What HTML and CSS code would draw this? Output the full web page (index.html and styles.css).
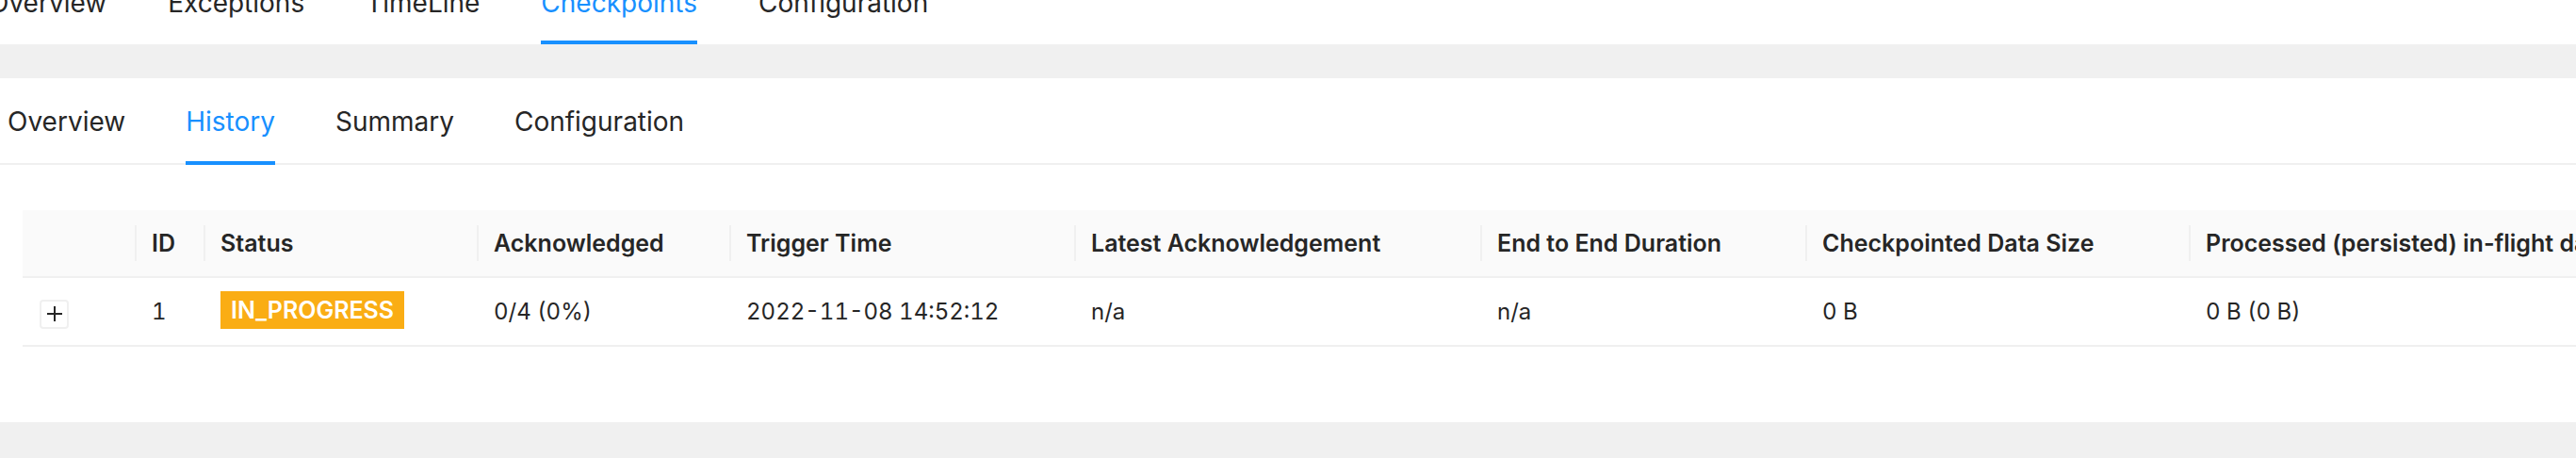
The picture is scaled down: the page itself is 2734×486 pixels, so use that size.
FILE: index.html
```html
<!DOCTYPE html>
<html lang="en">
<head>
<meta charset="utf-8">
<title>Checkpoints - History</title>
<link rel="stylesheet" href="styles.css">
</head>
<body>
  <nav class="topnav">
    <a class="toptab first">Overview</a>
    <a class="toptab">Exceptions</a>
    <a class="toptab">TimeLine</a>
    <a class="toptab active">Checkpoints</a>
    <a class="toptab">Configuration</a>
  </nav>

  <section class="card">
    <nav class="subnav">
      <a class="subtab">Overview</a>
      <a class="subtab active">History</a>
      <a class="subtab">Summary</a>
      <a class="subtab">Configuration</a>
    </nav>

    <div class="table-wrap">
      <table class="history">
        <colgroup>
          <col class="c-expand">
          <col class="c-id">
          <col class="c-status">
          <col class="c-ack">
          <col class="c-trigger">
          <col class="c-latest">
          <col class="c-e2e">
          <col class="c-size">
          <col class="c-processed">
        </colgroup>
        <thead>
          <tr>
            <th></th>
            <th>ID</th>
            <th>Status</th>
            <th>Acknowledged</th>
            <th>Trigger Time</th>
            <th>Latest Acknowledgement</th>
            <th>End to End Duration</th>
            <th>Checkpointed Data Size</th>
            <th>Processed (persisted) in-flight data</th>
          </tr>
        </thead>
        <tbody>
          <tr>
            <td>
              <button class="expand" type="button" aria-label="Expand row">
                <svg viewBox="0 0 16 16" width="16" height="16"><path d="M8 0v16M0 8h16" stroke="#262626" stroke-width="2" fill="none"/></svg>
              </button>
            </td>
            <td>1</td>
            <td><span class="tag">IN_PROGRESS</span></td>
            <td>0/4 (0%)</td>
            <td>2022-11-08 14:52:12</td>
            <td>n/a</td>
            <td>n/a</td>
            <td>0 B</td>
            <td>0 B (0 B)</td>
          </tr>
        </tbody>
      </table>
    </div>
  </section>
</body>
</html>
```
FILE: styles.css
```css
html, body {
  margin: 0;
  padding: 0;
}

body {
  background: #f0f0f0;
  font-family: Inter, "Noto Sans", sans-serif;
  color: #262626;
  overflow: hidden;
}

/* ---------- top tabs ---------- */
.topnav {
  height: 47px;
  background: #ffffff;
  display: flex;
  align-items: flex-end;
  gap: 65px;
  overflow: hidden;
}

.toptab {
  flex: none;
  font-size: 28px;
  line-height: 40px;
  padding-bottom: 20px;
  border-bottom: 4px solid transparent;
  color: #262626;
  white-space: nowrap;
}

.toptab.first {
  margin-left: -12px;
}

.toptab.active {
  color: #1890ff;
  border-bottom-color: #1890ff;
}

/* ---------- card ---------- */
.card {
  margin-top: 36px;
  background: #ffffff;
  padding-bottom: 80px;
  overflow: hidden;
}

.subnav {
  display: flex;
  gap: 64px;
  padding-left: 8px;
  border-bottom: 2px solid #f0f0f0;
}

.subtab {
  flex: none;
  font-size: 28px;
  line-height: 40px;
  padding: 26px 0 22px;
  border-bottom: 4px solid transparent;
  margin-bottom: -2px;
  color: #262626;
  white-space: nowrap;
}

.subtab.active {
  color: #1890ff;
  border-bottom-color: #1890ff;
}

/* ---------- table ---------- */
.table-wrap {
  margin: 48px 0 0 24px;
}

.history {
  width: 2899px;
  table-layout: fixed;
  border-collapse: collapse;
  border-spacing: 0;
}

.c-expand { width: 119px; }
.c-id { width: 73px; }
.c-status { width: 290px; }
.c-ack { width: 268px; }
.c-trigger { width: 366px; }
.c-latest { width: 431px; }
.c-e2e { width: 345px; }
.c-size { width: 407px; }
.c-processed { width: 600px; }

.history th,
.history td {
  padding: 0 16px 0 18px;
  text-align: left;
  vertical-align: middle;
  white-space: nowrap;
  overflow: hidden;
  border-bottom: 2px solid #f0f0f0;
}

.history th {
  position: relative;
  height: 70px;
  background: #fafafa;
  font-size: 25px;
  line-height: 36px;
  font-weight: 600;
  color: #262626;
}

.history th + th::before {
  content: "";
  position: absolute;
  left: 0;
  top: 16px;
  width: 2px;
  height: 38px;
  background: #f0f0f0;
}

.history td {
  height: 71px;
  font-size: 24px;
  line-height: 36px;
  color: #262626;
  font-feature-settings: "tnum" 1;
}

.expand {
  display: inline-flex;
  align-items: center;
  justify-content: center;
  width: 31px;
  height: 31px;
  padding: 0;
  margin: 0;
  margin-top: 4px;
  vertical-align: middle;
  background: #ffffff;
  border: 2px solid #f0f0f0;
  border-radius: 4px;
  box-sizing: border-box;
}

.tag {
  display: inline-block;
  vertical-align: middle;
  height: 40px;
  line-height: 40px;
  padding: 0 11px;
  margin-top: -3px;
  background: #faad14;
  color: #ffffff;
  font-size: 25px;
  font-weight: 600;
  font-feature-settings: normal;
}
```
